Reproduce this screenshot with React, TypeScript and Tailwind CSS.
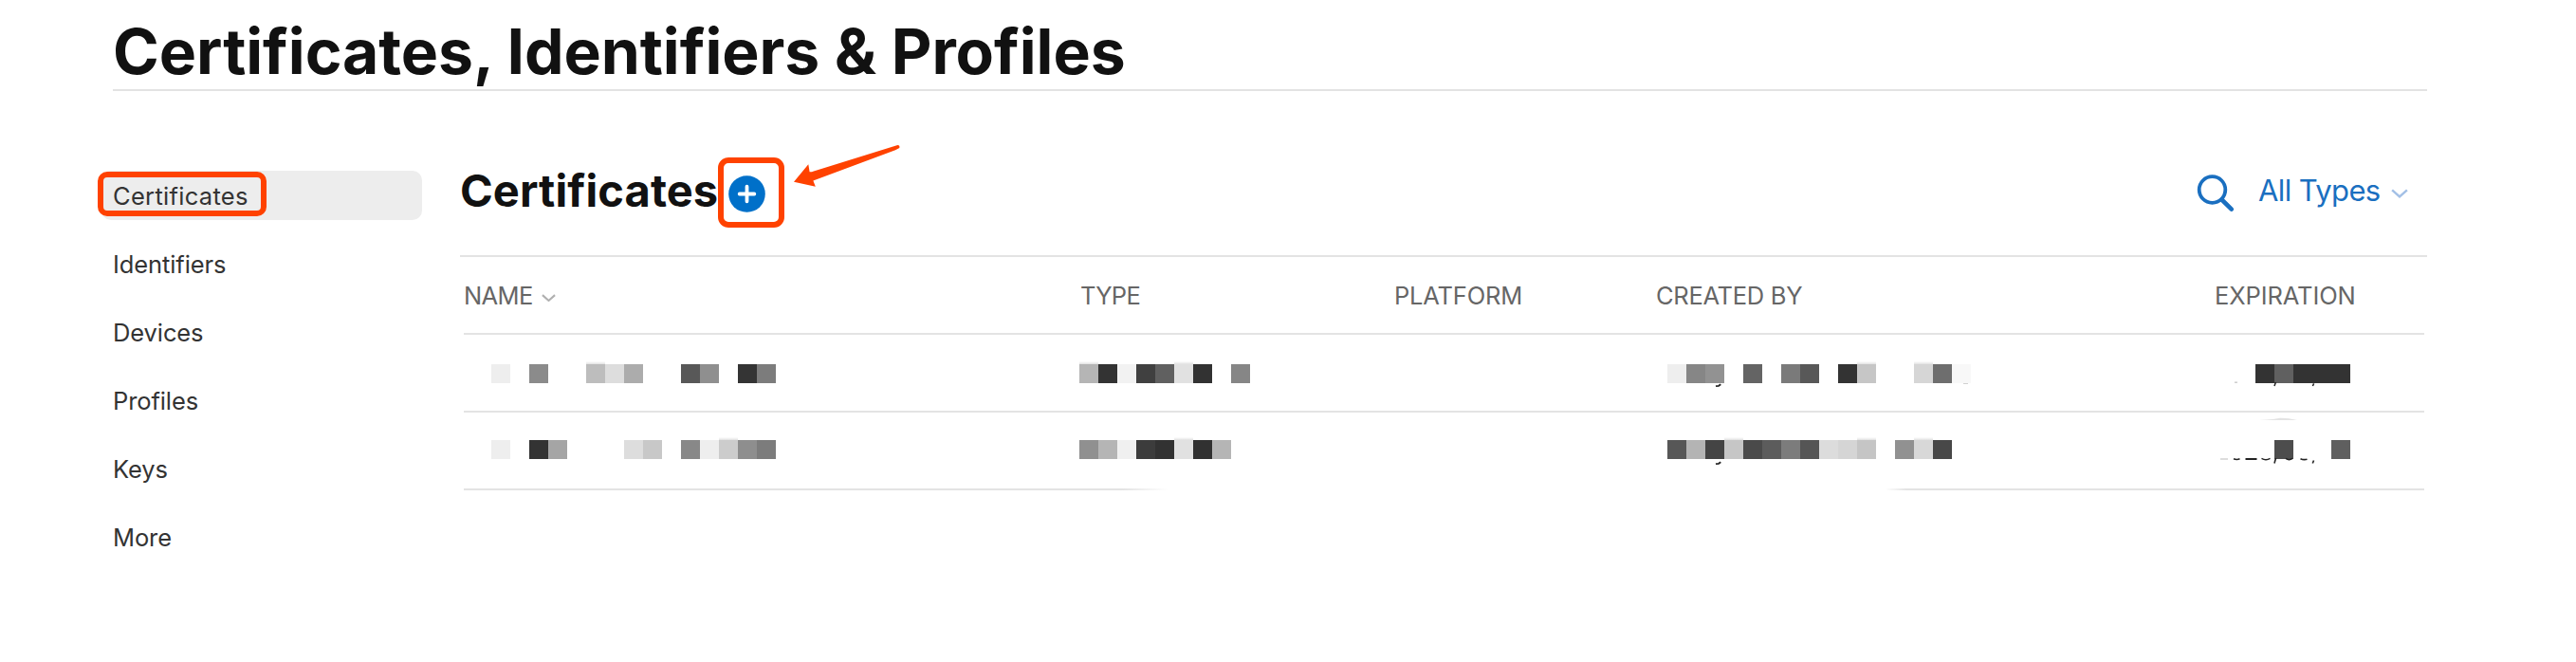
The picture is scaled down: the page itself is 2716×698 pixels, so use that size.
import type { ReactNode } from "react";

const NAV = ["Identifiers", "Devices", "Profiles", "Keys", "More"];

/* One entry per 20px cell; "" is an empty cell, a trailing "~" gives the cell a soft upper edge. */
const ROWS = [
  {
    name: "#eeeeee,,#8b8b8b,,,#bdbdbd~,#dddddd,#acacac,,,#585858,#8f8f8f,,#343434,#7c7c7c",
    type: "#b5b5b5~,#333333,#f2f2f2,#404040,#606060,#e1e1e1~,#323232,,#868686",
    by: "#eeeeee,#868686,#929292,,#646464,,#7a7a7a,#585858,,#333333,#c6c6c6~,,,#d6d6d6~,#6e6e6e,#f8f8f8",
    exp: "#333333,#606060,#333333,#333333,#333333",
  },
  {
    name: "#eeeeee,,#333333,#a5a5a5,,,,#dddddd,#c8c8c8,,#888888,#eeeeee,#cccccc~,#8e8e8e,#7c7c7c",
    type: "#909090,#b5b5b5,#f0f0f0,#3c3c3c,#323232,#e1e1e1~,#313131,#b5b5b5",
    by: "#575757,#b4b4b4,#444444,#c6c6c6~,#4a4a4a,#5c5c5c,#7c7c7c,#555555,#dcdcdc,#d5d5d5,#c5c5c5~,,#919191,#d8d8d8~,#484848",
    exp: ",#4d4d4d,,,#5f5f5f",
  },
];

function Mosaic({ cells, className = "" }: { cells: string; className?: string }) {
  return (
    <div className={`flex ${className}`}>
      {cells.split(",").map((c, i) => (
        <span key={i} className="relative h-5 w-5 shrink-0" style={{ backgroundColor: c.replace("~", "") || "transparent" }}>
          {c.endsWith("~") && <span className="absolute -top-[3px] left-0 h-[3px] w-5 bg-linear-to-t from-black/12 to-transparent" />}
        </span>
      ))}
    </div>
  );
}

function Chevron({ className, width }: { className: string; width: number }) {
  return (
    <svg viewBox="0 0 16 9" fill="none" stroke="currentColor" strokeWidth="2.2" className={className} width={width}>
      <path d="M1 1.2 8 7.4 15 1.2" />
    </svg>
  );
}

function Row({ className = "", children }: { className?: string; children: ReactNode }) {
  return <div className={`ml-1 grid w-[2067px] grid-cols-[649px_332px_276px_589px_221px] ${className}`}>{children}</div>;
}

export default function App() {
  return (
    <div className="h-[698px] w-[2716px] overflow-hidden bg-white pt-[14px] font-['Inter',sans-serif] text-[#111]">
      <header className="ml-[119px] w-[2440px] border-b-2 border-[#e3e3e3]">
        <h1 className="whitespace-nowrap text-[66px] leading-[80px] font-bold tracking-[-0.06px]">
          Certificates, Identifiers &amp; Profiles
        </h1>
      </header>

      <div className="flex pt-[84px]">
        <nav className="ml-[107px] flex w-[338px] shrink-0 flex-col gap-5 text-[25.5px] leading-[51px] tracking-[-0.1px] text-[#333]">
          <div className="relative h-[52px] rounded-[10px] bg-[#ededed] pt-px pl-3 tracking-[0.3px]">
            Certificates
            <span className="absolute top-px -left-1 h-[47px] w-[178px] rounded-[10px] border-6 border-[#ff4200]" />
          </div>
          {NAV.map((n) => (
            <div key={n} className="h-[52px] pt-px pl-3">{n}</div>
          ))}
        </nav>

        <main className="ml-10 w-[2074px] shrink-0">
          <div className="flex h-[89px] items-start">
            <h2 className="w-[272px] whitespace-nowrap text-[47px] leading-[42px] font-bold tracking-[0.1px]">Certificates</h2>
            <div className="relative -mt-[14px] h-[74px] w-[70px] shrink-0 rounded-[11px] border-6 border-[#ff4200] pt-[12.5px] pl-[5px]">
              <svg width="39" height="39" viewBox="0 0 39 39">
                <circle cx="19.5" cy="19.5" r="19.3" fill="#0070c9" />
                <path d="M11.7 19.5h15.6M19.5 11.7v15.6" stroke="#fff" strokeWidth="3.8" strokeLinecap="round" />
              </svg>
              <svg className="absolute -top-[20px] left-[73px]" width="114" height="50" viewBox="836 152 114 50" fill="#ff4200">
                <path d="M837 191.7 852.3 173.2 853.6 181.3Q856 181.3 858 180.4L946.4 153.1Q949 153.2 948.3 156L944 158.3 857.4 190.4 859.8 196.8Z" />
              </svg>
            </div>
            <div className="ml-auto flex items-start pr-[20px] text-[#1a6fc0]">
              <svg className="mt-[4px]" width="41" height="41" viewBox="0 0 41 41" fill="none" stroke="currentColor">
                <circle cx="16.5" cy="16" r="13.8" strokeWidth="3.8" />
                <path d="M26.5 26.5 36.8 36.6" strokeWidth="4.6" strokeLinecap="round" />
              </svg>
              <span className="ml-[24px] w-[132px] whitespace-nowrap text-[31px] leading-[42px] tracking-[-0.6px]">All Types</span>
              <Chevron className="mt-[18.5px] ml-2 text-[#a3c0e6]" width={18} />
            </div>
          </div>

          <section className="border-t-2 border-[#e3e3e3]">
            <Row className="h-[82px] border-b-2 border-[#e3e3e3] pt-px text-[25.5px] leading-[79px] whitespace-nowrap text-[#666]">
              <div className="flex items-start">
                <span className="w-[82px] tracking-[-0.6px]">NAME</span>
                <Chevron className="mt-[38px] text-[#b0b0b0]" width={15} />
              </div>
              <span className="pl-px tracking-[-0.7px]">TYPE</span>
              <span className="tracking-[-0.2px]">PLATFORM</span>
              <span className="tracking-[-0.3px]">CREATED BY</span>
              <span className="tracking-[-0.1px]">EXPIRATION</span>
            </Row>

            <Row className="h-[82px] border-b-2 border-[#e3e3e3] pt-[31px]">
              <Mosaic cells={ROWS[0].name} className="pl-[29px]" />
              <Mosaic cells={ROWS[0].type} />
              <span />
              <div className="relative">
                <Mosaic cells={ROWS[0].by} className="pl-3" />
                <svg className="absolute top-[20px] left-[60px]" width="280" height="6" fill="none" stroke="#222" strokeWidth="1.8">
                  <path d="M3 3.2 6 2.8 8.3 1.2" />
                  <path d="M264 0h5" stroke="#ccc" />
                </svg>
              </div>
              <div className="relative">
                <Mosaic cells={ROWS[0].exp} className="pl-[43px]" />
                <svg className="absolute top-[18px] left-[15px]" width="100" height="8" fill="none" stroke="#222" strokeWidth="1.5">
                  <path d="M6 1.2h3" stroke="#ccc" />
                  <path d="M49.4 1 48 5M89.6 2.4 88.4 5" />
                </svg>
              </div>
            </Row>

            <Row className="h-[80px] pt-[29px]">
              <Mosaic cells={ROWS[1].name} className="pl-[29px]" />
              <Mosaic cells={ROWS[1].type} />
              <span />
              <div className="relative">
                <Mosaic cells={ROWS[1].by} className="pl-3" />
                <svg className="absolute top-[22px] left-[60px]" width="12" height="6" fill="none" stroke="#222" strokeWidth="1.8">
                  <path d="M3 3.2 6 2.8 8.3 1.2" />
                </svg>
              </div>
              <div className="relative">
                <Mosaic cells={ROWS[1].exp} className="pl-[43px]" />
                <svg className="absolute -top-[24px] left-[45px]" width="46" height="4">
                  <path d="M2 3Q20 2 24 .8 32 .6 42 3Z" fill="#e3e3e3" />
                </svg>
                <svg className="absolute top-[17px] left-[0px]" width="120" height="10" fill="none" stroke="#222" strokeWidth="1.6">
                  <path d="M6 3h8" stroke="#bbb" strokeWidth="1" />
                  <path d="M20 2.8Q23.3 4.2 26.5 2.8M49.5 2.4Q54 5 58.5 2.4M75 2.4Q78.5 5 82 2.4M90.5 2.7Q94 4.3 97.5 3.2" />
                  <path d="M32.5 3h12" strokeWidth="2" />
                  <path d="M64.5 2 63 7.5M104.500 4.500 103.300 7.500" />
                </svg>
              </div>
            </Row>

            <div className="ml-1 flex h-[2px] w-[2067px]">
              <div className="w-[694px] bg-[#e3e3e3]" />
              <div className="w-[48px] bg-linear-to-r from-[#e3e3e3] to-white" />
              <div className="w-[757px]" />
              <div className="w-[22px] bg-linear-to-r from-white to-[#e3e3e3]" />
              <div className="flex-1 bg-[#e3e3e3]" />
            </div>
          </section>
        </main>
      </div>
    </div>
  );
}
